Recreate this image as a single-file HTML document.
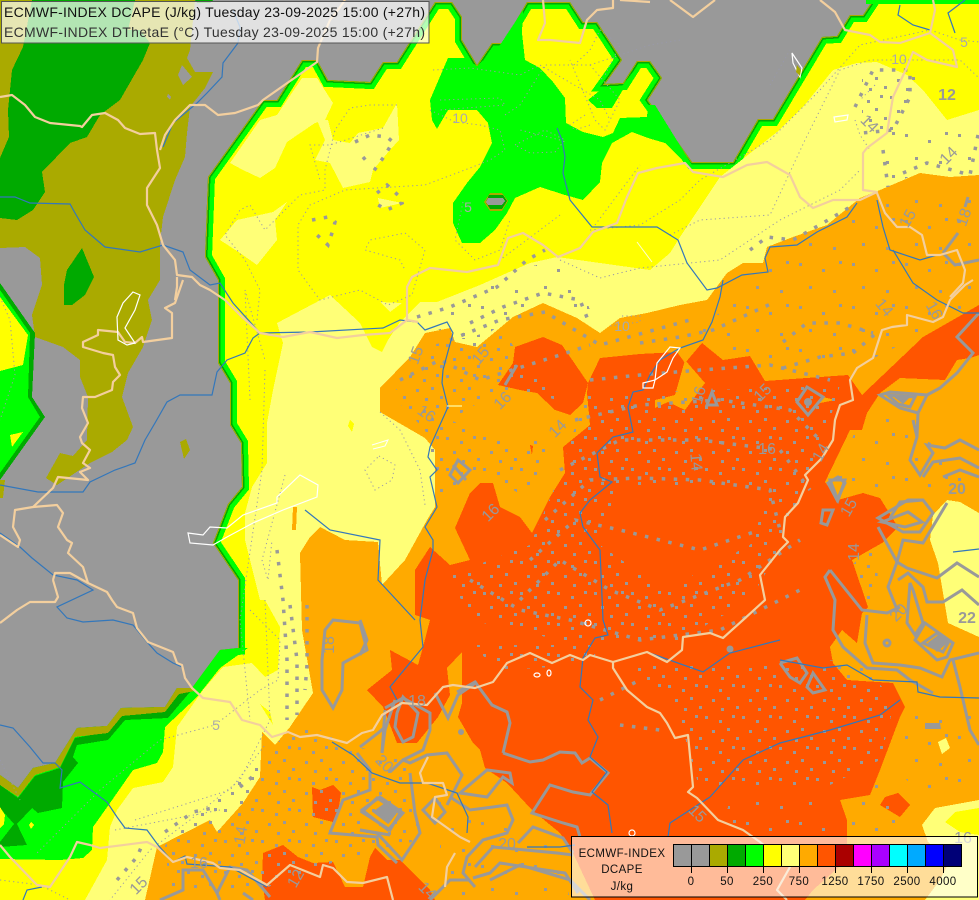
<!DOCTYPE html>
<html><head><meta charset="utf-8"><title>ECMWF-INDEX DCAPE</title>
<style>
html,body{margin:0;padding:0;background:#999}
svg{display:block}
.b{fill:none;stroke:#f3cf9e;stroke-width:2.2;stroke-linejoin:round}
.r{fill:none;stroke:#3377bb;stroke-width:1.2}
.w{fill:none;stroke:#fff;stroke-width:1.2}
.c{fill:none;stroke:#999;stroke-width:3;stroke-linejoin:miter}
.d{fill:none;stroke:#999;stroke-width:3.5;stroke-dasharray:3.5 8.5}
.t{fill:none;stroke:#9999aa;stroke-width:1;stroke-dasharray:1.2 3.2}
.n{font:16px "Liberation Sans",sans-serif;fill:#999;text-anchor:middle}
.s{font:14px "Liberation Sans",sans-serif;fill:#aaa;text-anchor:middle}
.l{font:11.5px "Liberation Sans",sans-serif;fill:#111;text-anchor:middle;letter-spacing:.4px}
.p{shape-rendering:crispEdges}
</style></head><body>
<svg width="979" height="900" viewBox="0 0 979 900" xmlns="http://www.w3.org/2000/svg">
<defs>
<polygon id="G" points="-20,760 0,775 18,788 33,768 55,763 77,728 107,726 121,708 165,707 177,688 192,688 220,650 238,648 238,580 213,543 228,504 242,487 241,443 230,425 230,383 218,363 218,280 205,257 208,177 263,100 277,100 302,60 317,60 328,80 370,82 383,62 397,62 435,2 452,2 462,17 462,40 477,65 492,43 503,43 527,2 570,2 583,22 597,22 622,60 605,84 623,83 637,61 650,61 662,78 648,100 692,162 733,162 758,119 773,119 822,37 837,36 850,15 863,15 873,0 885,-20 1000,-20 1000,920 -20,920"/>
<clipPath id="cg"><use href="#G"/></clipPath>
<pattern id="pA" width="37" height="31" patternUnits="userSpaceOnUse">
<rect x="2" y="3" width="3" height="3" fill="#999"/><rect x="16" y="7" width="3" height="3" fill="#999"/><rect x="29" y="2" width="3" height="3" fill="#999"/><rect x="9" y="17" width="3" height="3" fill="#999"/><rect x="24" y="15" width="3" height="3" fill="#999"/><rect x="33" y="24" width="3" height="3" fill="#999"/><rect x="18" y="26" width="3" height="3" fill="#999"/>
</pattern>
<pattern id="pB" width="53" height="43" patternUnits="userSpaceOnUse">
<rect x="4" y="5" width="3" height="3" fill="#999"/><rect x="27" y="11" width="3" height="3" fill="#999"/><rect x="44" y="3" width="3" height="3" fill="#999"/><rect x="14" y="28" width="3" height="3" fill="#999"/><rect x="38" y="32" width="3" height="3" fill="#999"/>
</pattern>
</defs>
<rect width="979" height="900" fill="#999"/>
<g class="p">
<!-- NW olive -->
<polygon fill="#aa0" points="0,0 195,0 190,50 187,58 195,72 213,72 205,88 190,107 187,133 185,157 175,180 163,217 160,243 160,280 148,300 152,320 143,347 128,373 122,397 133,427 127,440 112,452 90,463 57,485 46,478 60,453 73,456 87,440 88,397 80,377 80,360 63,347 35,337 32,315 42,285 40,258 25,247 0,248"/>
<polygon fill="#999" points="182,65 192,77 183,85 178,75"/>
<polygon fill="#999" points="168,94 171,97 170,100 167,97"/>
<polygon fill="#0a0" points="32,0 135,0 128,30 140,30 150,43 143,60 120,100 100,115 87,137 70,143 42,172 45,192 33,210 17,220 0,218 0,158 9,137 8,110 12,70 23,47"/>
<polygon fill="#0a0" points="195,0 213,0 210,3 197,3"/>
<polygon fill="#0a0" points="82,248 94,277 85,295 72,305 64,305 64,285 67,270"/>
<polygon fill="#aa0" points="180,442 186,439 190,450 184,459"/>
<!-- West wedge -->
<polygon fill="#0a0" points="0,283 35,333 32,397 45,417 0,480"/>
<polygon fill="#0f0" points="0,290 30,333 28,397 40,417 0,473"/>
<polygon fill="#ff0" points="0,297 28,335 23,365 0,371"/>
<polygon fill="#ff0" points="10,435 23,432 12,447"/>
<polygon fill="#aa0" points="0,480 5,480 3,498 0,498"/>
<!-- Main area -->
<use href="#G" fill="#ff0"/>
</g>
<g clip-path="url(#cg)" class="p" fill="none" stroke-linejoin="miter">
<use href="#G" stroke="#0f0" stroke-width="14"/>
<use href="#G" stroke="#0a0" stroke-width="5"/>
<use href="#G" stroke="#aa0" stroke-width="2"/>
</g>
<g class="p">
<rect x="866" y="0" width="113" height="4" fill="#0f0"/>
<!-- Central green -->
<polygon fill="#0f0" points="448,58 465,58 477,66 500,45 523,10 522,33 525,60 540,68 553,82 565,98 566,123 583,132 603,137 613,133 620,118 647,117 648,105 655,105 692,165 685,163 665,143 648,138 632,132 612,143 602,163 600,182 583,200 565,195 540,187 515,198 507,213 495,230 480,243 462,243 453,223 453,203 467,183 480,167 492,143 488,123 477,110 448,110 437,129 432,120 430,100"/>
<polygon fill="#0f0" points="588,100 603,88 622,86 636,68 612,108 597,108"/>
<polygon fill="#aa0" points="490,193 502,193 508,201 502,211 490,211 484,202"/>
<polygon fill="#0a0" points="489,195 503,195 507,201 502,209 490,209 486,202"/>
<polygon fill="#999" points="488,198 503,198 505,201 502,205 488,205 486,202"/>
<!-- Light yellow -->
<polygon fill="#ff7" points="230,163 260,120 277,115 302,78 317,78 333,103 325,120 315,123 287,142 275,168 260,178 243,170"/>
<polygon fill="#ff7" points="317,120 328,120 333,140 350,143 358,133 383,128 397,103 399,140 390,150 373,170 370,182 343,188 330,163 315,160 325,140"/>
<polygon fill="#ff7" points="220,240 237,220 273,212 287,202 275,220 277,240 257,265 240,253"/>
<polygon fill="#ff7" points="378,198 402,203 380,208"/>
<polygon fill="#ff7" points="380,302 402,303 390,312"/>
<polygon fill="#ff7" points="277,323 330,295 360,323 372,347 382,352 388,340 400,322 420,302 437,302 480,285 507,273 530,263 557,257 600,263 650,270 670,253 680,237 720,177 777,132 803,107 833,70 857,63 877,62 907,75 923,90 947,120 979,110 979,900 85,900 107,860 110,827 117,810 133,788 163,782 173,767 177,727 203,690 223,667 252,663 265,677 278,670 280,627 265,600 260,600 245,540 245,513 252,487 267,463 267,423 273,390 283,343"/>
<polygon fill="#ff0" points="260,704 270,712 273,725"/>
<polygon fill="#ff0" points="350,420 354,424 352,432 348,426"/>
<!-- lower-left greens -->
<polygon fill="#0f0" points="0,775 18,788 33,768 55,763 77,728 107,726 121,708 165,707 177,688 192,688 220,650 238,648 248,648 220,668 197,697 165,727 163,752 157,763 133,770 110,803 93,827 92,850 83,858 60,860 0,859"/>
<polygon fill="#0a0" points="0,785 18,798 35,776 60,768 75,738 108,732 122,716 165,712 178,694 190,692 168,718 125,720 108,740 77,745 73,757 78,763 63,782 62,808 38,813 32,808 17,824 27,845 0,847 0,842 14,824 0,808"/>
<polygon fill="#aa0" points="0,775 18,788 33,768 55,763 77,728 107,726 121,708 165,707 177,688 192,688 194,691 179,694 165,712 122,716 108,733 75,737 60,767 35,775 18,797 0,785"/>
<polygon fill="#ff0" points="0,807 5,815 4,824 0,828"/>
<polygon fill="#ff0" points="31,822 34,825 31,829 29,825"/>
<!-- Orange -->
<polygon fill="#fa0" points="145,900 157,847 210,820 217,832 243,803 260,777 262,732 275,745 290,727 313,693 302,630 300,553 310,537 320,527 345,540 378,542 382,585 405,560 427,520 435,507 435,450 425,438 380,412 380,388 410,357 425,333 450,328 455,342 477,347 513,317 543,303 577,318 600,333 620,318 647,313 680,305 707,300 727,273 743,263 763,263 767,247 793,237 827,225 860,198 880,190 920,173 950,177 979,175 979,513 960,502 947,500 933,515 930,540 938,563 943,593 948,623 979,637 979,800 935,808 922,825 928,842 950,860 940,880 925,900"/>
<polygon fill="#fa0" points="293,507 297,507 296,530 292,530"/>
<polygon fill="#ff7" points="938,742 946,738 950,748 942,754"/>
<polygon fill="#ff0" points="945,822 955,812 979,808 979,835 960,832"/>
<!-- Red -->
<polygon fill="#f50" points="415,570 430,547 450,565 470,560 455,528 470,493 480,483 493,483 500,507 520,517 532,533 550,497 565,473 563,447 590,425 587,393 588,383 600,358 640,354 677,352 685,363 702,343 723,360 750,356 765,381 848,375 862,395 923,337 979,305 979,355 970,358 957,360 945,380 900,378 880,393 867,413 862,430 850,430 825,482 838,500 863,493 880,498 898,527 882,543 852,560 868,607 862,613 857,643 842,630 830,647 833,663 847,680 893,683 905,707 900,717 880,770 870,795 840,800 847,820 847,860 813,890 805,900 595,900 573,853 560,833 532,810 507,783 485,768 480,750 473,743 458,717 462,703 462,652 447,668 450,695 438,717 417,743 397,743 383,707 367,690 392,670 390,650 418,665 423,647 430,620 415,615"/>
<polygon fill="#f50" points="515,347 543,337 562,345 588,383 583,403 570,415 555,410 537,393 520,390 498,385 513,363"/>
<polygon fill="#f50" points="530,445 533,446 532,455"/>
<polygon fill="#f50" points="312,787 320,790 333,785 341,793 338,813 333,822 313,817"/>
<polygon fill="#f50" points="263,853 283,845 298,857 313,863 333,862 345,887 363,887 370,857 375,848 387,860 400,860 430,890 435,900 265,900 262,880"/>
<polygon fill="#f50" points="885,797 898,793 910,805 900,817 880,805"/>
<polygon fill="#fa0" points="685,360 705,383 685,410 668,402 655,408 655,400 675,395"/>
<polygon fill="#fa0" points="823,397 835,400 820,403"/>
</g>

<!-- scattered dot fields -->
<g class="p">
<path fill="url(#pA)" fill-rule="evenodd" d="M585,395 840,385 815,470 785,540 750,600 680,640 560,640 470,620 450,575 530,545 560,475 Z M625,485 770,490 750,545 665,590 600,545 Z"/>
<path fill="url(#pA)" d="M392,395 432,345 500,330 560,400 500,390 450,420 500,440 555,440 530,500 480,470 440,500 425,430Z"/>
<path fill="url(#pA)" d="M625,665 855,660 895,700 880,760 820,790 700,790 680,720Z"/>
<path fill="url(#pA)" d="M470,645 600,645 590,665 500,670Z"/>
<path fill="url(#pA)" d="M165,845 260,760 300,720 350,745 410,760 420,840 340,860 260,890 170,890Z"/>
<path fill="url(#pA)" d="M852,565 875,545 880,600 865,610Z"/>
<path fill="url(#pA)" d="M862,75 915,72 915,100 890,135 862,130Z"/>
<path fill="url(#pB)" d="M700,330 790,250 880,200 950,185 979,190 979,300 900,345 850,370 770,372 720,350 700,345Z"/>
<path fill="url(#pB)" d="M830,490 860,420 890,410 925,440 979,470 979,500 930,490 890,495Z"/>
<path fill="url(#pB)" d="M880,130 960,120 979,140 979,170 930,165 885,190Z"/>
<path fill="url(#pB)" d="M430,310 520,270 570,255 590,310 540,300 470,345 430,325Z"/>
<path fill="url(#pB)" d="M900,720 979,700 979,800 930,800 895,770Z"/>
<path fill="url(#pB)" d="M842,800 880,775 905,830 850,835Z"/>
<path fill="url(#pB)" d="M440,800 560,850 570,900 440,900Z"/>
<path fill="url(#pB)" d="M730,800 830,800 835,835 720,835Z"/>
</g>

<!-- thin dotted contours -->
<g class="t">
<path d="M397,105 370,105 350,108 335,130 325,170 325,190 300,195 265,230 250,205 240,210 225,235 245,260 260,290 257,320"/>
<path d="M430,110 455,122 480,125 500,130 505,150 490,160 470,168 425,185 345,190 310,205 298,225 298,270 320,300 360,290 388,305 412,295 425,250 405,233 370,240 365,250 400,260 405,270"/>
<path d="M383,128 330,145 310,145 320,180 M433,70 470,68 520,75 540,65 600,100 610,120"/>
<path d="M440,100 500,98 505,105 440,110"/>
<path d="M515,145 545,130 565,140 555,152 530,153 515,145 M463,202 455,240 475,260 500,250 510,220"/>
<path d="M505,115 520,105 545,65 590,65 620,100 605,130 595,120 570,60"/>
<path d="M574,65 590,50 600,30 620,45 605,75 M560,140 520,130 M0,297 10,320 15,375 0,420"/>
<path d="M250,400 245,290 265,360 M265,370 262,470 240,620 250,720 M285,475 262,560 268,580 272,540"/>
<path d="M265,600 270,720 240,780 190,820 150,850 110,900 M250,610 280,640 278,680 260,690 215,725 160,740 100,790 60,830 35,855"/>
<path d="M135,820 230,790 265,745 M115,830 220,810 M0,880 40,885 70,900"/>
<path d="M590,65 650,45 680,40 M590,230 640,225 680,200 700,180 770,140 820,90 860,45 930,30 960,40 979,42"/>
<path d="M560,260 600,278 640,268 720,260 780,220 840,190 860,170 M670,235 700,220 770,215 805,140 840,70 870,60 960,60 979,78"/>
<path d="M855,120 860,135 870,150 M585,115 570,125 575,130 590,125"/>
<path d="M770,85 790,50 M560,215 500,260 M595,225 640,165 M875,85 860,100"/>
<path d="M380,412 400,430 420,470 425,505 M379,456 395,465 392,480 375,490 365,470 379,456 M622,316 640,316 640,322 610,326"/>
<path d="M0,760 20,800"/>
</g>

<!-- thick dots -->
<g class="d">
<path d="M590,380 640,375 700,370 770,365 830,380"/>
<path d="M575,420 640,405 720,400 790,410 820,440"/>
<path d="M560,470 620,440 700,440 780,450 810,490"/>
<path d="M545,520 590,480 640,478 700,480 770,490 780,530"/>
<path d="M530,560 575,520 620,530 700,550 760,530"/>
<path d="M520,600 560,560 610,590 660,610 740,580 800,540"/>
<path d="M470,580 520,610 570,620 640,640 720,630 800,590"/>
<path d="M450,340 500,320 545,312 600,345 690,320"/>
<path d="M400,380 440,360 480,380 560,355 590,345"/>
<path d="M750,250 767,237 793,240 823,223 850,207"/>
<path d="M417,317 450,307 497,287 527,260 545,250"/>
<path d="M470,323 503,307 543,293 580,300 590,325"/>
<path d="M640,343 680,337 713,330 773,303"/>
<path d="M783,342 807,323 840,323 873,333"/>
<path d="M783,368 820,357 853,353 880,330"/>
<path d="M855,107 873,70 910,70 910,97 893,130 862,133"/>
<path d="M883,150 888,187"/>
<path d="M903,173 927,163 970,175 979,130"/>
<path d="M277,550 283,600 287,660 287,720"/>
<path d="M290,605 297,660 297,715"/>
<path d="M307,605 307,665 305,690"/>
<path d="M240,787 257,773 M165,832 193,812 213,808"/>
<path d="M117,880 137,857 143,843"/>
<path d="M355,142 370,135 387,137 393,142 383,158 373,172"/>
<path d="M363,157 368,163"/>
<path d="M377,193 387,185 400,197 402,203 387,210 373,202"/>
<path d="M312,220 328,217 335,222 333,230 328,245 317,235 313,228"/>
<path d="M600,700 640,680 M620,725 660,730"/>
</g>

<!-- thick contours -->
<g class="c">
<polyline points="947,503 923,543 903,540 897,562 907,568 937,578 957,563 979,577"/>
<polygon points="908,500 923,500 933,513 920,532 903,532 878,518"/>
<polygon points="882,522 908,512 922,522 905,527"/>
<polyline points="878,527 897,562 888,587 898,612"/>
<polyline points="898,580 908,573 923,587 927,602 943,602 962,590 979,605"/>
<polyline points="830,570 825,577 835,600 833,630 843,647 867,668 897,670 910,680 933,693"/>
<polyline points="830,570 862,610 887,613 900,607"/>
<polyline points="867,615 865,643 873,663 900,665 920,668 942,677 950,660 979,653"/>
<polygon points="915,640 925,623 953,643 947,657 937,660"/>
<polygon points="923,643 937,633 948,643 943,652"/>
<polygon fill="#999" points="930,643 938,637 945,643 937,650"/>
<polygon points="910,583 907,623 915,635 923,623 913,590"/>
<circle cx="887" cy="643" r="3"/>
<polyline points="780,663 797,658 807,673 800,683 790,677 780,663"/>
<polygon points="813,673 825,690 813,693 807,687"/>
<polygon points="823,510 833,510 827,525 821,523"/>
<polygon points="830,480 845,480 838,500"/>
<polygon points="838,477 845,483 837,500 828,483"/>
<polyline points="953,660 960,687 970,730 979,745"/>
<polyline points="913,420 917,437 910,460 920,475 933,453 927,445 945,448 960,440 979,450"/>
<polyline points="923,477 933,462 960,458 979,468"/>
<polyline points="943,477 960,470 979,477"/>
<polyline points="890,518 900,502 923,500"/>
<polyline points="927,395 940,388 957,373 973,353 957,337 979,313"/>
<polygon points="880,395 890,392 927,395 918,413 900,408"/>
<polygon points="888,395 915,397 910,407 898,404"/>
<polygon fill="#999" points="895,396 908,397 903,402"/>
<polyline points="918,413 917,437"/>
<polygon points="797,402 807,387 823,397 808,415"/>
<circle cx="808" cy="402" r="2.5" fill="#999"/>
<polygon points="712,392 717,405 707,405"/>
<line x1="517" y1="365" x2="505" y2="385"/>
<polygon points="458,460 470,470 458,483 450,475"/>
<line x1="453" y1="465" x2="466" y2="480"/>
<polyline points="943,253 958,233"/>
<polyline points="943,253 955,265 979,260"/>
<line x1="968" y1="197" x2="965" y2="207"/>
<polyline points="503,753 510,723 507,712 492,705 475,682 457,692"/>
<polyline points="503,753 530,762 543,760 560,752 575,753 582,763 590,758 608,773 590,795 573,792 550,785 532,813 563,823 577,827 580,837"/>
<polygon points="460,793 487,770 510,773 512,783 503,777 487,797"/>
<polyline points="390,772 403,760 410,763 427,755 447,753 462,775 447,805"/>
<polyline points="435,693 448,718 458,695 477,682"/>
<polyline points="410,773 415,813 420,833 402,860 377,833 360,830"/>
<line x1="360" y1="830" x2="390" y2="835"/>
<polygon points="362,810 380,797 403,813 388,830"/>
<polygon fill="#999" points="375,812 386,804 395,813 388,822"/>
<polygon points="403,697 418,713 413,737 403,742 395,727 397,713"/>
<polyline points="385,708 403,698 430,713 430,730 423,750 403,760"/>
<polyline points="385,710 382,753"/>
<polyline points="360,747 378,733 385,727"/>
<polyline points="450,797 470,810 493,807 507,805 513,820 507,833 483,840 467,857 463,873 475,887"/>
<polygon points="423,810 435,798 445,812 435,823"/>
<polyline points="518,843 533,827 563,838 573,853"/>
<polyline points="475,867 493,847 557,853 573,855"/>
<polyline points="473,878 490,873 500,863 565,873 578,893"/>
<polyline points="360,620 367,640 360,655"/>
<polygon points="333,620 360,623 367,650 343,663 342,690 333,708 322,690 322,660 325,630"/>
<polyline points="357,753 370,770 370,790 343,800 330,833 377,837 378,845 397,863"/>
<polygon points="362,812 377,798 400,813 390,830"/>
<polyline points="160,900 183,890 183,870 203,870 217,893 230,867 247,870 270,897"/>
<polyline points="217,893 220,900"/>
<polyline points="243,893 253,900"/>
<polyline points="395,700 385,730 382,753"/>
<polyline points="490,880 520,865 570,880 590,900"/>
<polyline points="430,900 450,880 470,880"/>
</g>
<polygon points="925,723 940,723 941,729 925,729" fill="#999"/>
<circle cx="461" cy="732" r="3" fill="#999"/>
<circle cx="730" cy="649" r="3.5" fill="#999"/>

<!-- rivers -->
<g class="r">
<polyline points="0,197 15,197 30,203 70,204 75,213 85,230 105,247 140,252 163,245 183,252 190,270 210,285 220,283 233,303 260,333 253,338 245,353 227,360 217,372 212,395 180,395 167,402 155,423 145,440 135,463 115,470 90,482 83,492 38,492 0,485"/>
<polyline points="163,147 173,123 197,103 207,93 222,77 223,63 238,43 240,27 233,10"/>
<polyline points="0,533 20,547 32,558 53,575 77,580 93,590 57,607 67,618 83,622 113,620 133,625 147,642 157,653 173,663 182,667"/>
<polyline points="0,725 13,728 30,747 43,763 55,763 62,770 60,788 80,782 107,802 117,817 125,828 147,830 158,845 173,862 185,856 187,864 230,867 267,887"/>
<polyline points="42,887 27,890 23,900"/>
<polyline points="332,742 353,755 372,773 400,783 427,783 457,793 468,817 467,833"/>
<polyline points="527,847 560,847 575,845"/>
<polyline points="250,323 260,333 310,332 383,328 400,320 417,322 425,330 447,322 453,333 443,370 442,383 448,407 430,447 428,457 437,470 430,477 437,507 425,527 433,540 433,550 425,580 420,620 423,647 390,687 397,700"/>
<polyline points="305,510 330,530 380,540 378,580 415,620"/>
<polyline points="600,550 583,527 580,513 590,500 612,482 600,477 597,453 613,437 633,432 628,407 633,392 643,390 650,375 660,360 680,348 703,340 712,322 720,297 723,280"/>
<polyline points="600,550 603,620 608,635 595,638 583,658 580,687 593,700 588,720 598,737 590,757 607,772 592,792 608,805 612,833"/>
<polyline points="877,200 883,227 890,250 920,260 937,255"/>
<polyline points="893,250 913,283 937,300 963,313 979,313"/>
<polyline points="857,203 847,217 817,232 797,245 770,247 765,258 768,272 742,275 717,288 707,290 687,263 678,240 657,227 592,227 570,200 563,173 565,157 562,140 557,128"/>
<polyline points="900,5 898,15 913,25 930,30"/>
<polyline points="965,0 948,13 955,33"/>
<polyline points="647,652 703,672 730,653 780,640"/>
<polyline points="710,797 743,760 780,743 830,730 880,715 900,700"/>
<polyline points="710,797 670,823 668,837"/>
<polyline points="780,660 823,668 847,665 873,680 917,682 918,692 940,697 979,698"/>
<polyline points="953,552 979,549"/>
</g>

<!-- country borders -->
<g class="b">
<polyline points="0,97 12,95 25,105 35,117 50,123 80,126 82,127 92,115 105,113 118,120 125,128 140,134 155,133 157,150 160,168 147,188 147,205 157,225 163,245 175,260 177,275 192,277 200,285 210,290 225,300 240,315 260,333 283,337 310,332 337,338 363,335 390,333 407,320 407,287 412,277 430,268 467,272 498,265 508,238 523,233 543,245 558,257 580,248 593,232 617,223 627,197 638,173 657,168 685,163 693,172 723,177 747,165 767,162 790,175 800,197 813,208 833,200 860,200 877,192 863,190 863,153 867,148 887,133 893,97 907,67 913,52 927,60 957,67 953,50 930,33 935,10 933,0"/>
<polyline points="930,33 900,43 880,42 870,35 845,30 835,12 820,0"/>
<polyline points="407,320 418,322"/>
<polyline points="160,150 165,135 175,120 190,105 205,105 218,115 235,113 258,105 263,100 303,72 317,62 318,48 330,20 338,10 345,0"/>
<polyline points="543,0 545,23 538,40 550,40 580,43 587,20 597,10 613,8 613,0"/>
<polyline points="670,0 693,17 715,0"/>
<polyline points="620,0 650,2"/>
<polyline points="177,277 177,287 175,300"/>
<polyline points="183,280 175,303 165,308 172,313 172,338 143,342 142,337 135,343 125,342 118,332 98,330 98,335 83,342 83,347 103,353 113,355 115,367 120,375 113,382 112,390 95,397 83,397 82,408 88,423 80,437 82,443 90,450 83,463 90,468 80,472 88,480 58,477 53,488 33,507 15,510 13,527 20,540 18,547 0,535"/>
<polyline points="33,507 57,505 63,513 58,527 67,540 72,543 68,553 83,567 88,583 107,592 112,600 117,607 133,613 137,628 148,642 173,652 177,663 182,665 185,678 192,688 203,698 230,702 242,720 260,725 272,737 288,732 300,737 317,735 347,743 362,733 373,730 382,715 402,703 427,705 443,687 453,685 475,688 493,682 507,663 530,653 552,663 570,655 583,660 590,655 613,662 647,652 667,662 682,650 683,637 710,633 723,638 743,620 765,600 760,575 780,550 782,548 788,542 783,537 785,517 798,503 808,480 805,475 822,458 833,440 835,420 840,405 853,400 850,380 857,368 873,358 882,330 892,327 907,325 907,315 933,322 943,317 950,300 965,285 973,280"/>
<polyline points="53,580 55,573 70,573 88,583"/>
<polyline points="53,580 58,597 55,602 30,602 17,610 0,623"/>
<polyline points="613,662 613,668 627,690 647,707 660,713 667,723 675,738 688,735 693,787 688,792 697,798 718,820 743,830 760,842 790,867 777,890 787,900"/>
<polyline points="0,845 10,857 37,885 50,887 70,857 77,842 90,845 100,848 147,842 157,847 173,862 187,857 213,863 220,868 240,870 267,885 290,865 320,877 323,865 333,868 347,882 363,883 387,877 393,900"/>
<polyline points="428,757 420,773 423,783 443,783 447,795 435,797 432,817 460,837 470,842"/>
<polyline points="455,853 447,867 445,887"/>
<polyline points="877,193 885,213 897,227 910,227 922,235 927,255 940,255 957,250 965,270 963,283 950,297"/>
</g>

<!-- lakes -->
<g class="w">
<polygon points="133,292 140,295 135,310 125,328 135,343 127,345 118,340 117,317 123,303"/>
<polygon points="300,475 318,485 317,497 283,510 253,523 227,537 213,545 190,543 188,533 203,535 210,527 227,528 243,515 277,503 277,497"/>
<polygon points="643,383 655,380 657,363 670,347 680,348 673,358 667,372 655,380 653,388 643,388"/>
<polygon points="792,53 802,68 800,77 793,63"/>
<polygon points="834,117 848,115 847,120 835,122"/>
<ellipse cx="537" cy="675" rx="3" ry="2"/>
<ellipse cx="549" cy="673" rx="2" ry="3"/>
<ellipse cx="588" cy="623" rx="3" ry="3"/>
<ellipse cx="632" cy="833" rx="3" ry="3"/>
</g>
<polygon points="797,65 801,70 800,76 796,72" fill="#aa0"/>
<polyline points="447,406 462,406" fill="none" stroke="#ffffaa" stroke-width="1.2"/>
<polyline points="372,445 388,440 385,446 373,449" fill="none" stroke="#fff" stroke-width="1"/>
<polyline points="637,242 652,262" fill="none" stroke="#ffffcc" stroke-width="1"/>

<!-- contour labels -->
<g>
<text class="s" x="460" y="123">10</text>
<text class="s" x="468" y="212">5</text>
<text class="s" x="622" y="331">10</text>
<text class="s" x="216" y="730">5</text>
<text class="s" x="964" y="47">5</text>
<text class="s" x="899" y="64">10</text>
<text class="n" x="415" y="361" transform="rotate(-70 415 355)">15</text>
<text class="n" x="480" y="361" transform="rotate(-50 480 355)">15</text>
<text class="n" x="427" y="419" transform="rotate(35 427 413)">16</text>
<text class="n" x="502" y="406" transform="rotate(-45 502 400)">16</text>
<text class="n" x="557" y="434" transform="rotate(-45 557 428)">14</text>
<text class="n" x="490" y="518" transform="rotate(-45 490 512)">16</text>
<text class="n" x="762" y="398" transform="rotate(-45 762 392)">15</text>
<text class="n" x="767" y="454">16</text>
<text class="n" x="697" y="468" transform="rotate(85 697 462)">14</text>
<text class="n" x="698" y="401" transform="rotate(-75 698 395)">16</text>
<text class="n" x="820" y="458" transform="rotate(-60 820 452)">14</text>
<text class="n" x="885" y="313" transform="rotate(50 885 307)">14</text>
<text class="n" x="935" y="316" transform="rotate(60 935 310)">16</text>
<text class="n" x="848" y="513" transform="rotate(-60 848 507)">15</text>
<text class="n" x="853" y="558" transform="rotate(-90 853 552)">14</text>
<text class="n" x="957" y="494" style="font-weight:bold">20</text>
<text class="n" x="967" y="623" style="font-weight:bold">22</text>
<text class="n" x="898" y="618" transform="rotate(-45 898 612)">20</text>
<text class="n" x="947" y="100" style="font-weight:bold">12</text>
<text class="n" x="870" y="129" transform="rotate(45 870 123)">14</text>
<text class="n" x="948" y="161" transform="rotate(-45 948 155)">14</text>
<text class="n" x="907" y="224" transform="rotate(-60 907 218)">15</text>
<text class="n" x="963" y="223" transform="rotate(-70 963 217)">18</text>
<text class="n" x="328" y="651" transform="rotate(-90 328 645)">18</text>
<text class="n" x="385" y="769" transform="rotate(45 385 763)">20</text>
<text class="n" x="240" y="841" transform="rotate(-80 240 835)">14</text>
<text class="n" x="199" y="868">16</text>
<text class="n" x="138" y="891" transform="rotate(-45 138 885)">15</text>
<text class="n" x="295" y="884" transform="rotate(-60 295 878)">12</text>
<text class="n" x="417" y="706">18</text>
<text class="n" x="507" y="849">20</text>
<text class="n" x="698" y="819" transform="rotate(45 698 813)">15</text>
<text class="n" x="428" y="896" transform="rotate(45 428 890)">14</text>
<text class="n" x="963" y="843">16</text>
</g>

<!-- Title box -->
<rect x="1.5" y="1.5" width="427.5" height="41.5" fill="#fff" fill-opacity=".7" stroke="#555" stroke-width="1"/>
<text x="4" y="17" font-family="Liberation Sans, sans-serif" font-size="14" fill="#111" textLength="421" lengthAdjust="spacing">ECMWF-INDEX DCAPE (J/kg) Tuesday 23-09-2025 15:00 (+27h)</text>
<text x="4" y="37" font-family="Liberation Sans, sans-serif" font-size="14" fill="#333" textLength="421" lengthAdjust="spacing">ECMWF-INDEX DThetaE (°C) Tuesday 23-09-2025 15:00 (+27h)</text>

<!-- Legend -->
<rect x="571.5" y="836.5" width="406" height="60.5" fill="#fff" fill-opacity=".6" stroke="#000" stroke-width="1"/>
<text class="l" x="622" y="857">ECMWF-INDEX</text>
<text class="l" x="622" y="873">DCAPE</text>
<text class="l" x="622" y="890">J/kg</text>
<g class="p" stroke="#000" stroke-width="1">
<rect x="673.5" y="844.5" width="18" height="22" fill="#999"/>
<rect x="691.5" y="844.5" width="18" height="22" fill="#999"/>
<rect x="709.5" y="844.5" width="18" height="22" fill="#aa0"/>
<rect x="727.5" y="844.5" width="18" height="22" fill="#0a0"/>
<rect x="745.5" y="844.5" width="18" height="22" fill="#0f0"/>
<rect x="763.5" y="844.5" width="18" height="22" fill="#ff0"/>
<rect x="781.5" y="844.5" width="18" height="22" fill="#ff7"/>
<rect x="799.5" y="844.5" width="18" height="22" fill="#fa0"/>
<rect x="817.5" y="844.5" width="18" height="22" fill="#f50"/>
<rect x="835.5" y="844.5" width="18" height="22" fill="#a00"/>
<rect x="853.5" y="844.5" width="18" height="22" fill="#f0f"/>
<rect x="871.5" y="844.5" width="18" height="22" fill="#a0f"/>
<rect x="889.5" y="844.5" width="18" height="22" fill="#0ff"/>
<rect x="907.5" y="844.5" width="18" height="22" fill="#0af"/>
<rect x="925.5" y="844.5" width="18" height="22" fill="#00f"/>
<rect x="943.5" y="844.5" width="18" height="22" fill="#007"/>
<path d="M691.5,866V873M727.5,866V873M763.5,866V873M799.5,866V873M835.5,866V873M871.5,866V873M907.5,866V873M943.5,866V873" fill="none"/>
</g>
<text class="l" x="691" y="885">0</text>
<text class="l" x="727" y="885">50</text>
<text class="l" x="763" y="885">250</text>
<text class="l" x="799" y="885">750</text>
<text class="l" x="835" y="885">1250</text>
<text class="l" x="871" y="885">1750</text>
<text class="l" x="907" y="885">2500</text>
<text class="l" x="943" y="885">4000</text>
</svg>
</body></html>
